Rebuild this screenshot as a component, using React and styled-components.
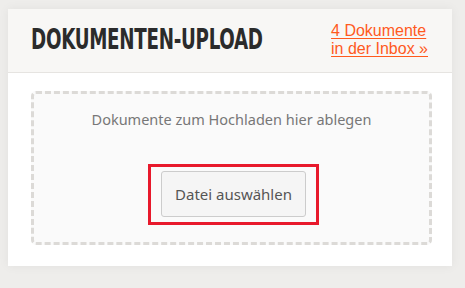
import React from "react";
import styled, { createGlobalStyle } from "styled-components";

const Global = createGlobalStyle`
  html, body { margin: 0; padding: 0; background: #eeedeb; }
  body { width: 465px; height: 288px; overflow: hidden; font-family: "Noto Sans", "Liberation Sans", sans-serif; }
`;

const Page = styled.div`
  padding: 9px 13px 0 8px;
`;

const Card = styled.section`
  width: 444px;
  background: #ffffff;
  box-shadow: 0 0 10px rgba(0, 0, 0, 0.06);
`;

const Header = styled.header`
  height: 64px;
  box-sizing: border-box;
  background: #f8f7f5;
  border-bottom: 1px solid #e6e4e1;
  display: flex;
  align-items: center;
  justify-content: space-between;
  padding: 0 24px 0 23px;
`;

const Title = styled.h2`
  margin: 0 0 4px;
  width: 240px;
  flex: none;
  font-family: "DejaVu Sans Condensed", "DejaVu Sans", sans-serif;
  font-weight: 700;
  font-size: 29px;
  color: #2b2b2b;
  letter-spacing: -0.4px;
  transform: scaleX(0.7);
  transform-origin: left center;
  white-space: nowrap;
`;

const InboxLink = styled.a`
  font-family: "Liberation Sans", sans-serif;
  font-size: 16px;
  line-height: 18px;
  color: #ff5a1e;
  white-space: nowrap;
  text-decoration: underline;
  text-underline-offset: 2px;
  margin-bottom: 2px;
`;

const Body = styled.div`
  padding: 18px 20px 21px 23px;
`;

const DropZone = styled.div`
  border: 3px dashed #dcdad7;
  border-radius: 5px;
  background: #fafafa;
  padding: 16px 0 17px;
  display: flex;
  flex-direction: column;
  align-items: center;
`;

const Hint = styled.p`
  margin: 0;
  font-size: 14.5px;
  line-height: 18px;
  color: #777777;
`;

const Highlight = styled.div`
  margin: 36px 0 0 4px;
  border: 3px solid #e8192c;
  padding: 4px 10px 5px 10px;
`;

const FileButton = styled.button`
  display: block;
  width: 145px;
  height: 46px;
  border: 1px solid #cccccc;
  border-radius: 3px;
  background: #f5f5f5;
  font-family: inherit;
  font-size: 15px;
  color: #555555;
  cursor: pointer;
`;

export default function App() {
  return (
    <>
      <Global />
      <Page>
        <Card>
          <Header>
            <Title>DOKUMENTEN-UPLOAD</Title>
            <InboxLink href="#">
              4 Dokumente
              <br />
              in der Inbox »
            </InboxLink>
          </Header>
          <Body>
            <DropZone>
              <Hint>Dokumente zum Hochladen hier ablegen</Hint>
              <Highlight>
                <FileButton type="button">Datei auswählen</FileButton>
              </Highlight>
            </DropZone>
          </Body>
        </Card>
      </Page>
    </>
  );
}
